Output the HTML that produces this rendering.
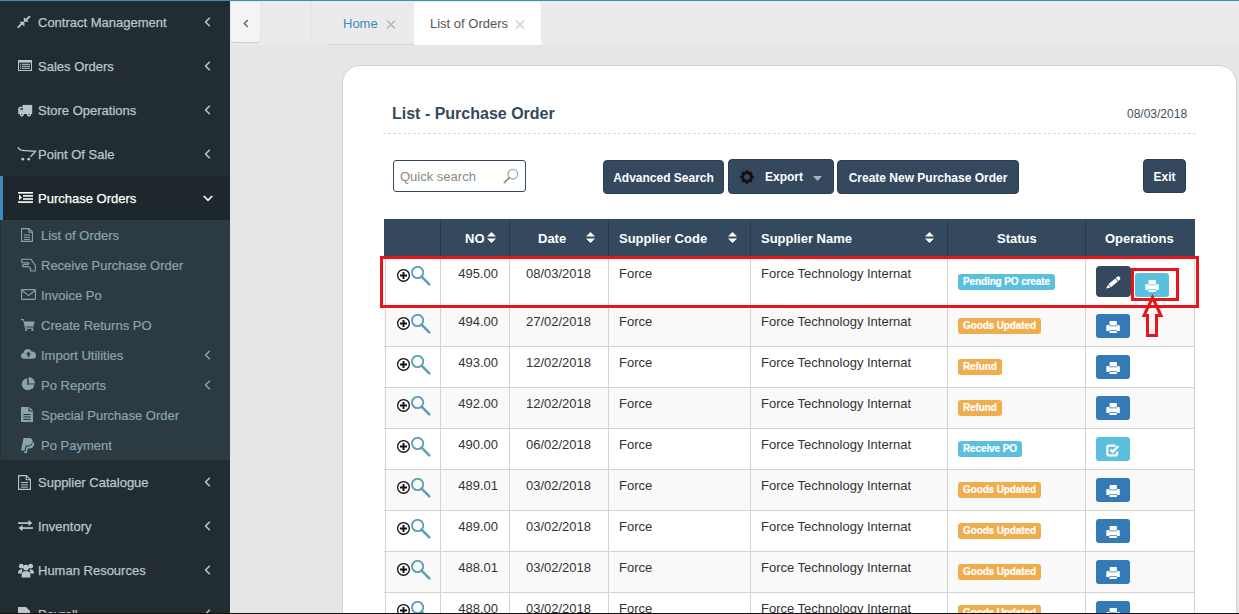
<!DOCTYPE html>
<html><head><meta charset="utf-8">
<style>
*{box-sizing:border-box;margin:0;padding:0}
html,body{width:1239px;height:614px;overflow:hidden;background:#e6e6e6;font-family:"Liberation Sans",sans-serif}
.abs{position:absolute}
#topline{left:0;top:0;width:1239px;height:1px;background:#3c8dbc;z-index:5}
#sidebar{left:0;top:0;width:230px;height:614px;background:#222d32}
.mi{position:absolute;left:0;width:230px;height:44px;color:#b8c7ce;font-size:13px}
.mi .t{position:absolute;left:38px;top:15px;white-space:nowrap;-webkit-text-stroke:0.25px currentColor}
.mi svg.ic{position:absolute}
.mi .chev{position:absolute;left:204px;top:17px}
.active{background:#1e282c;color:#fff}
#sub{left:0;top:220px;width:230px;box-shadow:inset 1px 0 0 #263237;height:240px;background:#2c3b41}
.si{position:absolute;left:0;width:230px;height:30px;color:#8aa4af;font-size:13px}
.si .t{position:absolute;left:41px;top:8px;white-space:nowrap;-webkit-text-stroke:0.2px currentColor}
.si svg.ic{position:absolute}
.si .chev{position:absolute;left:204px;top:10px}
#tabbar{left:230px;top:1px;width:1009px;height:44px;background:#ebebeb}
#collapse{left:231px;top:2px;width:29px;height:40px;background:#f4f4f4;border-radius:0 0 4px 4px;box-shadow:0 1px 1px rgba(0,0,0,.12)}
#card{left:342px;top:65px;width:895px;height:600px;background:#fff;border:1px solid #d2d2d2;border-radius:18px}
.btnp{position:absolute;background:#34495e;border:1px solid #2c3e50;border-radius:4px;color:#fff;font-size:12px;font-weight:bold;text-align:center;line-height:32px;padding-top:1px;white-space:nowrap}
.hd{position:absolute;top:231px;color:#fff;font-size:13px;font-weight:bold;white-space:nowrap}
.row{position:absolute;left:0;width:811px}
.row .c1{position:absolute;left:13px}
.row .c1 svg{display:block}
.tx{position:absolute;font-size:13px;color:#333;line-height:16px;white-space:nowrap}
.no{right:697px}
.dt{left:125px;width:99px;text-align:center}
.sc{left:235px}
.sn{left:377px}
.lbl{position:absolute;left:574px;height:16px;line-height:16px;padding:0 5px;border-radius:3px;color:#fff;font-size:10px;font-weight:bold;white-space:nowrap;letter-spacing:-0.12px;-webkit-text-stroke:0.2px #fff}
.lbl.info{background:#5bc0de}
.lbl.warn{background:#f0ad4e}
.btn{position:absolute;border-radius:3px}
.btn .ico{position:absolute;left:0;top:0}
.bdark{background:#34495e;border-radius:4px}
.bprim{background:#337ab7}
.binfo{background:#5bc0de}
</style></head><body>
<div id="topline" class="abs"></div>
<div id="sidebar" class="abs">
<div class="mi " style="top:0px"><svg class="ic" style="left:17px;top:16px" width="14" height="12" viewBox="0 0 14 12"><g stroke="#b8c7ce" stroke-width="1.9" fill="none" stroke-linecap="round"><path d="M12.5 0.6L9 4.1"/><path d="M1.3 11.2L4.8 7.7"/></g><g fill="#b8c7ce"><path d="M6.8 1.1V5.8H11.7Z"/><path d="M7.4 5.8V10.6L2.2 5.8Z"/></g></svg><span class="t" style="left:38px">Contract Management</span><svg class="chev" width="7" height="10" viewBox="0 0 7 10"><path d="M5.8 0.8L1.6 5L5.8 9.2" stroke="#b8c7ce" stroke-width="1.5" fill="none"/></svg></div>
<div class="mi " style="top:44px"><svg class="ic" style="left:18px;top:16px" width="14" height="11" viewBox="0 0 14 11"><g fill="#b8c7ce"><rect x="0" y="0" width="14" height="2.6"/><rect x="0" y="0" width="1" height="11"/><rect x="13" y="0" width="1" height="11"/><rect x="0" y="10" width="14" height="1"/><rect x="2" y="3.8" width="1.2" height="1"/><rect x="4" y="3.8" width="8" height="1"/><rect x="2" y="5.8" width="1.2" height="1"/><rect x="4" y="5.8" width="8" height="1"/><rect x="2" y="7.8" width="1.2" height="1"/><rect x="4" y="7.8" width="8" height="1"/></g></svg><span class="t" style="left:38px">Sales Orders</span><svg class="chev" width="7" height="10" viewBox="0 0 7 10"><path d="M5.8 0.8L1.6 5L5.8 9.2" stroke="#b8c7ce" stroke-width="1.5" fill="none"/></svg></div>
<div class="mi " style="top:88px"><svg class="ic" style="left:18px;top:16px" width="15" height="13" viewBox="0 0 15 13"><g fill="#b8c7ce"><path d="M4.6 0.9H14.2V10H4.6Z"/><path d="M0.2 10V5.2Q0.2 2.8 2.6 2.8H4.8V10Z"/><circle cx="3.8" cy="10.6" r="2.1"/><circle cx="11" cy="10.6" r="2.1"/></g><g fill="#222d32"><path d="M2 5.8Q2 3.9 3.6 3.9H4.8V5.8Z"/><circle cx="3.8" cy="10.6" r="0.7"/><circle cx="11" cy="10.6" r="0.7"/></g></svg><span class="t" style="left:38px">Store Operations</span><svg class="chev" width="7" height="10" viewBox="0 0 7 10"><path d="M5.8 0.8L1.6 5L5.8 9.2" stroke="#b8c7ce" stroke-width="1.5" fill="none"/></svg></div>
<div class="mi " style="top:132px"><svg class="ic" style="left:17px;top:14px" width="20" height="15" viewBox="0 0 20 15"><path d="M0.9 1.4Q2.4 4.2 5.2 4.4L18.6 5.3L13.5 10.7" stroke="#b8c7ce" stroke-width="1.3" fill="none"/><circle cx="5.8" cy="13.2" r="1.4" fill="#b8c7ce"/><circle cx="11.7" cy="13.2" r="1.4" fill="#b8c7ce"/></svg><span class="t" style="left:38px">Point Of Sale</span><svg class="chev" width="7" height="10" viewBox="0 0 7 10"><path d="M5.8 0.8L1.6 5L5.8 9.2" stroke="#b8c7ce" stroke-width="1.5" fill="none"/></svg></div>
<div class="abs" style="left:0;top:176px;width:230px;height:44px;background:#1e282c"></div><div class="abs" style="left:0;top:176px;width:3px;height:44px;background:#3c8dbc"></div>
<div class="mi" style="top:176px;color:#fff"><svg class="ic" style="left:18px;top:16px" width="15" height="11" viewBox="0 0 15 11"><g fill="#fff"><rect x="0" y="0" width="15" height="1.6"/><rect x="5" y="3.1" width="10" height="1.6"/><rect x="5" y="6.2" width="10" height="1.6"/><rect x="0" y="9.3" width="15" height="1.6"/><path d="M1 2.6L4 5.4L1 8.2Z"/></g></svg><span class="t">Purchase Orders</span><svg class="chev" style="left:203px;top:19px" width="10" height="7" viewBox="0 0 10 7"><path d="M0.8 1L5 5.3L9.2 1" stroke="#fff" stroke-width="1.6" fill="none"/></svg></div>
</div>
<div id="sub" class="abs">
<div class="si" style="top:0px"><svg class="ic" style="left:21px;top:8px" width="12" height="14" viewBox="0 0 12 14"><g fill="none" stroke="#8aa4af" stroke-width="1.1"><path d="M0.6 0.6H8L11.4 4V13.4H0.6Z"/><path d="M7.8 0.6V4.2H11.4"/></g><g fill="#8aa4af"><rect x="3" y="6.5" width="6" height="1"/><rect x="3" y="8.8" width="6" height="1"/><rect x="3" y="11" width="6" height="1"/></g></svg><span class="t">List of Orders</span></div>
<div class="si" style="top:30px"><svg class="ic" style="left:21px;top:8px" width="15" height="14" viewBox="0 0 15 14"><path d="M0.8 1.2H10L14.3 7.5V13H9.6V10.8L7.5 8.6H2.2Q1.4 8.6 1.6 7.6Q1.8 6.4 3 6.4H7.2L7.6 4.8H1.8Q0.6 4.8 0.8 3.4Z" fill="none" stroke="#8aa4af" stroke-width="1.1"/></svg><span class="t">Receive Purchase Order</span></div>
<div class="si" style="top:60px"><svg class="ic" style="left:21px;top:9px" width="15" height="11" viewBox="0 0 15 11"><g fill="none" stroke="#8aa4af" stroke-width="1.1"><rect x="0.6" y="0.6" width="13.8" height="9.8" rx="0.8"/><path d="M0.8 1.2L7.5 6.6L14.2 1.2"/></g></svg><span class="t">Invoice Po</span></div>
<div class="si" style="top:90px"><svg class="ic" style="left:21px;top:9px" width="14" height="12" viewBox="0 0 14 12"><g fill="#8aa4af"><path d="M0 0H2.6L3.4 2.4H13.6L12.4 7.6H4.6L5 8.6H12.4V9.8H4.1L2.2 1.3H0Z"/><circle cx="5.2" cy="10.9" r="1.1"/><circle cx="11.4" cy="10.9" r="1.1"/></g></svg><span class="t">Create Returns PO</span></div>
<div class="si" style="top:120px"><svg class="ic" style="left:21px;top:8px" width="15" height="11" viewBox="0 0 15 11"><path d="M3.2 10.8Q0 10.8 0 7.8Q0 5.2 2.6 5Q2.8 1.4 6.6 1Q9.4 0.9 10.6 3.4Q15 3.4 15 7.2Q15 10.8 11.6 10.8Z" fill="#8aa4af"/><path d="M7.5 3.6L10.2 6.6H8.4V9H6.6V6.6H4.8Z" fill="#2c3b41"/></svg><span class="t">Import Utilities</span><svg class="chev" width="7" height="10" viewBox="0 0 7 10"><path d="M5.8 0.8L1.6 5L5.8 9.2" stroke="#8aa4af" stroke-width="1.5" fill="none"/></svg></div>
<div class="si" style="top:150px"><svg class="ic" style="left:21px;top:7px" width="14" height="14" viewBox="0 0 14 14"><path d="M6.2 1.2A6 6 0 1 0 12.8 7.8H6.2Z" fill="#8aa4af"/><path d="M7.6 0V6.4H14A6.6 6.6 0 0 0 7.6 0Z" fill="#8aa4af"/><path d="M8 7.6H13.6L11.6 12Z" fill="#8aa4af"/></svg><span class="t">Po Reports</span><svg class="chev" width="7" height="10" viewBox="0 0 7 10"><path d="M5.8 0.8L1.6 5L5.8 9.2" stroke="#8aa4af" stroke-width="1.5" fill="none"/></svg></div>
<div class="si" style="top:180px"><svg class="ic" style="left:21px;top:7px" width="12" height="15" viewBox="0 0 12 15"><path d="M0 0H7.6V4.6H12V15H0Z" fill="#8aa4af"/><path d="M8.6 0L12 3.5H8.6Z" fill="#8aa4af"/><g fill="#2c3b41"><rect x="2.4" y="7" width="7.2" height="1.1"/><rect x="2.4" y="9.4" width="7.2" height="1.1"/><rect x="2.4" y="11.8" width="7.2" height="1.1"/></g></svg><span class="t">Special Purchase Order</span></div>
<div class="si" style="top:210px"><svg class="ic" style="left:21px;top:8px" width="13" height="15" viewBox="0 0 13 15"><path d="M2.6 0H8Q12.2 0 11.4 3.8Q10.6 7.4 6.6 7.4H4.6L3.6 12.6H0Z" fill="#8aa4af"/><path d="M11.8 3.2Q13.6 4.6 12.8 7.4Q12 10.4 8.2 10.4H6.8L5.9 15H2.8L3.2 13.4H4.6L5.5 8.6H7.2Q11.2 8.6 11.8 3.2Z" fill="#8aa4af"/></svg><span class="t">Po Payment</span></div>
</div>
<div class="abs" style="left:0;top:460px;width:230px;height:154px">
<div class="mi " style="top:0px"><svg class="ic" style="left:18px;top:15px" width="13" height="15" viewBox="0 0 13 15"><g fill="none" stroke="#b8c7ce" stroke-width="1.1"><path d="M0.6 0.6H8.4L12.4 4.6V14.4H0.6Z"/><path d="M8.2 0.6V4.8H12.4"/></g><g fill="#b8c7ce"><rect x="3" y="7" width="7" height="1"/><rect x="3" y="9.3" width="7" height="1"/><rect x="3" y="11.6" width="7" height="1"/></g></svg><span class="t" style="left:38px">Supplier Catalogue</span><svg class="chev" width="7" height="10" viewBox="0 0 7 10"><path d="M5.8 0.8L1.6 5L5.8 9.2" stroke="#b8c7ce" stroke-width="1.5" fill="none"/></svg></div>
<div class="mi " style="top:44px"><svg class="ic" style="left:18px;top:16px" width="15" height="11" viewBox="0 0 15 11"><g fill="#b8c7ce"><rect x="0" y="2.2" width="11" height="1.7"/><path d="M10.5 0L14.4 3.05L10.5 6.1Z"/><rect x="4" y="7.2" width="11" height="1.7"/><path d="M4.5 4.9L0.6 8.05L4.5 11.2Z"/></g></svg><span class="t" style="left:38px">Inventory</span><svg class="chev" width="7" height="10" viewBox="0 0 7 10"><path d="M5.8 0.8L1.6 5L5.8 9.2" stroke="#b8c7ce" stroke-width="1.5" fill="none"/></svg></div>
<div class="mi " style="top:88px"><svg class="ic" style="left:18px;top:15px" width="16" height="15" viewBox="0 0 16 15"><g fill="#b8c7ce"><circle cx="3.3" cy="3.2" r="2.4"/><circle cx="12.7" cy="3.2" r="2.4"/><circle cx="8" cy="4.6" r="2.9"/><path d="M0 10.6Q0 6.6 3 6.6H4.6Q3.6 8.6 4 10.6Z"/><path d="M16 10.6Q16 6.6 13 6.6H11.4Q12.4 8.6 12 10.6Z"/><path d="M3.6 14.4Q3.4 8.2 6.2 8.2H9.8Q12.6 8.2 12.4 14.4Z"/></g></svg><span class="t" style="left:38px">Human Resources</span><svg class="chev" width="7" height="10" viewBox="0 0 7 10"><path d="M5.8 0.8L1.6 5L5.8 9.2" stroke="#b8c7ce" stroke-width="1.5" fill="none"/></svg></div>
<div class="mi " style="top:132px"><svg class="ic" style="left:18px;top:15px" width="13" height="15" viewBox="0 0 13 15"><path d="M0 0H8L12 4V15H0Z" fill="#b8c7ce"/></svg><span class="t" style="left:38px">Payroll</span><svg class="chev" width="7" height="10" viewBox="0 0 7 10"><path d="M5.8 0.8L1.6 5L5.8 9.2" stroke="#b8c7ce" stroke-width="1.5" fill="none"/></svg></div>
</div>
<div id="tabbar" class="abs"></div>
<div class="abs" style="left:311px;top:1px;width:1px;height:44px;background:#e5e5e5"></div>
<div id="collapse" class="abs"><svg class="abs" style="left:11px;top:16.5px" width="8" height="9" viewBox="0 0 8 9"><path d="M5.8 1L2.3 4.5L5.8 8" stroke="#666" stroke-width="1.4" fill="none"/></svg></div>
<div class="abs" style="left:327px;top:44px;width:87px;height:1px;background:#d6d6d6"></div>
<div class="abs" style="left:343px;top:16px;font-size:13px;color:#3c8dbc">Home</div>
<svg class="abs" style="left:386px;top:20px" width="10" height="9" viewBox="0 0 10 9"><path d="M1 0.5L9 8.5M9 0.5L1 8.5" stroke="#b3b3b3" stroke-width="1.4"/></svg>
<div class="abs" style="left:414px;top:2px;width:127px;height:43px;background:#fff;border-radius:3px 3px 0 0"></div>
<div class="abs" style="left:430px;top:16px;font-size:13px;color:#555">List of Orders</div>
<svg class="abs" style="left:515px;top:20px" width="10" height="9" viewBox="0 0 10 9"><path d="M1 0.5L9 8.5M9 0.5L1 8.5" stroke="#cccccc" stroke-width="1.4"/></svg>
<div id="card" class="abs"></div>
<div class="abs" style="left:392px;top:105px;font-size:16px;font-weight:bold;color:#34495e">List - Purchase Order</div>
<div class="abs" style="left:1127px;top:107px;font-size:12px;color:#3f5165">08/03/2018</div>
<div class="abs" style="left:383px;top:133px;width:813px;height:0;border-top:1px dashed #dcdcdc"></div>
<div class="abs" style="left:393px;top:160px;width:133px;height:32px;border:1px solid #34495e;border-radius:3px"></div>
<div class="abs" style="left:400px;top:169px;font-size:13px;color:#888">Quick search</div>
<svg class="abs" style="left:503px;top:168px" width="16" height="16" viewBox="0 0 16 16"><circle cx="9.8" cy="6.2" r="4.8" fill="none" stroke="#aaa" stroke-width="1.4"/><path d="M6.3 9.7L1.5 14.5" stroke="#999" stroke-width="2" stroke-linecap="round"/></svg>
<div class="btnp" style="left:603px;top:160px;width:121px;height:34px;">Advanced Search</div>
<div class="btnp" style="left:728px;top:159px;width:106px;height:35px;"><svg class="abs" style="left:9.5px;top:9.2px" width="16" height="16" viewBox="-8 -8 16 16"><path d="M0.00 -7.30L2.14 -5.17L5.16 -5.16L5.17 -2.14L7.30 0.00L5.17 2.14L5.16 5.16L2.14 5.17L0.00 7.30L-2.14 5.17L-5.16 5.16L-5.17 2.14L-7.30 0.00L-5.17 -2.14L-5.16 -5.16L-2.14 -5.17Z" fill="#111"/><circle r="2.5" fill="#34495e" stroke="#44556a" stroke-width="0.6"/></svg><span class="abs" style="left:36px;top:10px;line-height:normal">Export</span><svg class="abs" style="left:84px;top:16px" width="9" height="5" viewBox="0 0 9 5"><path d="M0 0H9L4.5 5Z" fill="#aab4bf"/></svg></div>
<div class="btnp" style="left:837px;top:160px;width:182px;height:34px;">Create New Purchase Order</div>
<div class="btnp" style="left:1143px;top:159px;width:43px;height:34px;">Exit</div>
<div id="tbl" class="abs" style="left:384px;top:0;width:811px;height:614px">
<div class="abs" style="left:0;top:219px;width:811px;height:37px;background:#34495e"></div>
<div class="abs" style="left:56px;top:219px;width:1px;height:37px;background:#2a3b4c"></div>
<div class="abs" style="left:125px;top:219px;width:1px;height:37px;background:#2a3b4c"></div>
<div class="abs" style="left:224px;top:219px;width:1px;height:37px;background:#2a3b4c"></div>
<div class="abs" style="left:366px;top:219px;width:1px;height:37px;background:#2a3b4c"></div>
<div class="abs" style="left:563px;top:219px;width:1px;height:37px;background:#2a3b4c"></div>
<div class="abs" style="left:701px;top:219px;width:1px;height:37px;background:#2a3b4c"></div>
<svg class="abs" style="left:103px;top:232px" width="9" height="11" viewBox="0 0 9 11"><path d="M4.5 0L9 4.6H0Z M4.5 11L9 6.4H0Z" fill="#fff"/></svg>
<svg class="abs" style="left:202px;top:232px" width="9" height="11" viewBox="0 0 9 11"><path d="M4.5 0L9 4.6H0Z M4.5 11L9 6.4H0Z" fill="#fff"/></svg>
<svg class="abs" style="left:344px;top:232px" width="9" height="11" viewBox="0 0 9 11"><path d="M4.5 0L9 4.6H0Z M4.5 11L9 6.4H0Z" fill="#fff"/></svg>
<svg class="abs" style="left:541px;top:232px" width="9" height="11" viewBox="0 0 9 11"><path d="M4.5 0L9 4.6H0Z M4.5 11L9 6.4H0Z" fill="#fff"/></svg>
<div class="hd" style="left:81px">NO</div><div class="hd" style="left:154px">Date</div><div class="hd" style="left:235px">Supplier Code</div><div class="hd" style="left:377px">Supplier Name</div><div class="hd" style="left:613px">Status</div><div class="hd" style="left:721px">Operations</div>
<div class="row" style="top:256px;height:50px;background:#fff">
<div class="c1" style="top:10px"><svg width="36" height="22" viewBox="0 0 36 22"><circle cx="6.5" cy="9.4" r="5.85" fill="none" stroke="#111" stroke-width="1.3"/><path d="M3 9.5h7M6.5 6v7" stroke="#111" stroke-width="1.9"/><circle cx="20.6" cy="6.5" r="5.65" fill="none" stroke="#5c9fb6" stroke-width="1.8"/><path d="M24.6 10.6L32.3 18.3" stroke="#5c9fb6" stroke-width="2.6" stroke-linecap="round"/></svg></div>
<div class="tx no" style="top:10px">495.00</div>
<div class="tx dt" style="top:10px">08/03/2018</div>
<div class="tx sc" style="top:10px">Force</div>
<div class="tx sn" style="top:10px">Force Technology Internat</div>
<div class="lbl info" style="top:18px">Pending PO create</div>
<div class="btn bdark" style="top:10px;left:712px;width:35px;height:31px"><svg class="ico" width="35" height="31" viewBox="0 0 35 31"><g transform="translate(10.2,22.6) rotate(-40)"><path d="M0 0L3.8 -2V2Z" fill="#fff"/><rect x="4.5" y="-2" width="9" height="4" fill="#fff"/><path d="M14.2 -2H16Q17.8 -2 17.8 0Q17.8 2 16 2H14.2Z" fill="#fff"/></g></svg></div>
<div class="btn binfo" style="top:17px;left:751px;width:34px;height:24px"><svg class="ico" width="34" height="24" viewBox="0 0 34 24"><g transform="translate(10,7)"><path d="M4.2 0H10.2Q10.9 0 10.9 0.8V4.4H3.6V0.8Q3.6 0 4.2 0Z" fill="#fff"/><path d="M0.3 5Q0.3 4.1 1.2 4.1H3.2V5.3H11.2V4.1H12.9Q13.8 4.1 13.8 5V9.9H10.9V9.2H3.2V9.9H0.3Z" fill="#fff"/><rect x="3.4" y="9.9" width="7.5" height="2.1" rx="0.4" fill="#fff"/></g></svg></div>
</div>
<div class="row" style="top:306px;height:41px;background:#f9f9f9">
<div class="c1" style="top:8px"><svg width="36" height="22" viewBox="0 0 36 22"><circle cx="6.5" cy="9.4" r="5.85" fill="none" stroke="#111" stroke-width="1.3"/><path d="M3 9.5h7M6.5 6v7" stroke="#111" stroke-width="1.9"/><circle cx="20.6" cy="6.5" r="5.65" fill="none" stroke="#5c9fb6" stroke-width="1.8"/><path d="M24.6 10.6L32.3 18.3" stroke="#5c9fb6" stroke-width="2.6" stroke-linecap="round"/></svg></div>
<div class="tx no" style="top:8px">494.00</div>
<div class="tx dt" style="top:8px">27/02/2018</div>
<div class="tx sc" style="top:8px">Force</div>
<div class="tx sn" style="top:8px">Force Technology Internat</div>
<div class="lbl warn" style="top:12px">Goods Updated</div>
<div class="btn bprim" style="top:8px;left:712px;width:34px;height:24px"><svg class="ico" width="34" height="24" viewBox="0 0 34 24"><g transform="translate(10,7)"><path d="M4.2 0H10.2Q10.9 0 10.9 0.8V4.4H3.6V0.8Q3.6 0 4.2 0Z" fill="#fff"/><path d="M0.3 5Q0.3 4.1 1.2 4.1H3.2V5.3H11.2V4.1H12.9Q13.8 4.1 13.8 5V9.9H10.9V9.2H3.2V9.9H0.3Z" fill="#fff"/><rect x="3.4" y="9.9" width="7.5" height="2.1" rx="0.4" fill="#fff"/></g></svg></div>
</div>
<div class="row" style="top:347px;height:41px;background:#fff">
<div class="c1" style="top:8px"><svg width="36" height="22" viewBox="0 0 36 22"><circle cx="6.5" cy="9.4" r="5.85" fill="none" stroke="#111" stroke-width="1.3"/><path d="M3 9.5h7M6.5 6v7" stroke="#111" stroke-width="1.9"/><circle cx="20.6" cy="6.5" r="5.65" fill="none" stroke="#5c9fb6" stroke-width="1.8"/><path d="M24.6 10.6L32.3 18.3" stroke="#5c9fb6" stroke-width="2.6" stroke-linecap="round"/></svg></div>
<div class="tx no" style="top:8px">493.00</div>
<div class="tx dt" style="top:8px">12/02/2018</div>
<div class="tx sc" style="top:8px">Force</div>
<div class="tx sn" style="top:8px">Force Technology Internat</div>
<div class="lbl warn" style="top:12px">Refund</div>
<div class="btn bprim" style="top:8px;left:712px;width:34px;height:24px"><svg class="ico" width="34" height="24" viewBox="0 0 34 24"><g transform="translate(10,7)"><path d="M4.2 0H10.2Q10.9 0 10.9 0.8V4.4H3.6V0.8Q3.6 0 4.2 0Z" fill="#fff"/><path d="M0.3 5Q0.3 4.1 1.2 4.1H3.2V5.3H11.2V4.1H12.9Q13.8 4.1 13.8 5V9.9H10.9V9.2H3.2V9.9H0.3Z" fill="#fff"/><rect x="3.4" y="9.9" width="7.5" height="2.1" rx="0.4" fill="#fff"/></g></svg></div>
</div>
<div class="row" style="top:388px;height:41px;background:#f9f9f9">
<div class="c1" style="top:8px"><svg width="36" height="22" viewBox="0 0 36 22"><circle cx="6.5" cy="9.4" r="5.85" fill="none" stroke="#111" stroke-width="1.3"/><path d="M3 9.5h7M6.5 6v7" stroke="#111" stroke-width="1.9"/><circle cx="20.6" cy="6.5" r="5.65" fill="none" stroke="#5c9fb6" stroke-width="1.8"/><path d="M24.6 10.6L32.3 18.3" stroke="#5c9fb6" stroke-width="2.6" stroke-linecap="round"/></svg></div>
<div class="tx no" style="top:8px">492.00</div>
<div class="tx dt" style="top:8px">12/02/2018</div>
<div class="tx sc" style="top:8px">Force</div>
<div class="tx sn" style="top:8px">Force Technology Internat</div>
<div class="lbl warn" style="top:12px">Refund</div>
<div class="btn bprim" style="top:8px;left:712px;width:34px;height:24px"><svg class="ico" width="34" height="24" viewBox="0 0 34 24"><g transform="translate(10,7)"><path d="M4.2 0H10.2Q10.9 0 10.9 0.8V4.4H3.6V0.8Q3.6 0 4.2 0Z" fill="#fff"/><path d="M0.3 5Q0.3 4.1 1.2 4.1H3.2V5.3H11.2V4.1H12.9Q13.8 4.1 13.8 5V9.9H10.9V9.2H3.2V9.9H0.3Z" fill="#fff"/><rect x="3.4" y="9.9" width="7.5" height="2.1" rx="0.4" fill="#fff"/></g></svg></div>
</div>
<div class="row" style="top:429px;height:41px;background:#fff">
<div class="c1" style="top:8px"><svg width="36" height="22" viewBox="0 0 36 22"><circle cx="6.5" cy="9.4" r="5.85" fill="none" stroke="#111" stroke-width="1.3"/><path d="M3 9.5h7M6.5 6v7" stroke="#111" stroke-width="1.9"/><circle cx="20.6" cy="6.5" r="5.65" fill="none" stroke="#5c9fb6" stroke-width="1.8"/><path d="M24.6 10.6L32.3 18.3" stroke="#5c9fb6" stroke-width="2.6" stroke-linecap="round"/></svg></div>
<div class="tx no" style="top:8px">490.00</div>
<div class="tx dt" style="top:8px">06/02/2018</div>
<div class="tx sc" style="top:8px">Force</div>
<div class="tx sn" style="top:8px">Force Technology Internat</div>
<div class="lbl info" style="top:12px">Receive PO</div>
<div class="btn binfo" style="top:8px;left:712px;width:34px;height:24px"><svg class="ico" width="34" height="24" viewBox="0 0 34 24"><path d="M19.5 8.6H13Q11.3 8.6 11.3 10.3V16.7Q11.3 18.4 13 18.4H19.4Q21.1 18.4 21.1 16.7V14.8" fill="none" stroke="#fff" stroke-width="2.2"/><path d="M14.4 12.6L16.6 14.8L22.4 9.2" fill="none" stroke="#fff" stroke-width="2.4"/></svg></div>
</div>
<div class="row" style="top:470px;height:41px;background:#f9f9f9">
<div class="c1" style="top:8px"><svg width="36" height="22" viewBox="0 0 36 22"><circle cx="6.5" cy="9.4" r="5.85" fill="none" stroke="#111" stroke-width="1.3"/><path d="M3 9.5h7M6.5 6v7" stroke="#111" stroke-width="1.9"/><circle cx="20.6" cy="6.5" r="5.65" fill="none" stroke="#5c9fb6" stroke-width="1.8"/><path d="M24.6 10.6L32.3 18.3" stroke="#5c9fb6" stroke-width="2.6" stroke-linecap="round"/></svg></div>
<div class="tx no" style="top:8px">489.01</div>
<div class="tx dt" style="top:8px">03/02/2018</div>
<div class="tx sc" style="top:8px">Force</div>
<div class="tx sn" style="top:8px">Force Technology Internat</div>
<div class="lbl warn" style="top:12px">Goods Updated</div>
<div class="btn bprim" style="top:8px;left:712px;width:34px;height:24px"><svg class="ico" width="34" height="24" viewBox="0 0 34 24"><g transform="translate(10,7)"><path d="M4.2 0H10.2Q10.9 0 10.9 0.8V4.4H3.6V0.8Q3.6 0 4.2 0Z" fill="#fff"/><path d="M0.3 5Q0.3 4.1 1.2 4.1H3.2V5.3H11.2V4.1H12.9Q13.8 4.1 13.8 5V9.9H10.9V9.2H3.2V9.9H0.3Z" fill="#fff"/><rect x="3.4" y="9.9" width="7.5" height="2.1" rx="0.4" fill="#fff"/></g></svg></div>
</div>
<div class="row" style="top:511px;height:41px;background:#fff">
<div class="c1" style="top:8px"><svg width="36" height="22" viewBox="0 0 36 22"><circle cx="6.5" cy="9.4" r="5.85" fill="none" stroke="#111" stroke-width="1.3"/><path d="M3 9.5h7M6.5 6v7" stroke="#111" stroke-width="1.9"/><circle cx="20.6" cy="6.5" r="5.65" fill="none" stroke="#5c9fb6" stroke-width="1.8"/><path d="M24.6 10.6L32.3 18.3" stroke="#5c9fb6" stroke-width="2.6" stroke-linecap="round"/></svg></div>
<div class="tx no" style="top:8px">489.00</div>
<div class="tx dt" style="top:8px">03/02/2018</div>
<div class="tx sc" style="top:8px">Force</div>
<div class="tx sn" style="top:8px">Force Technology Internat</div>
<div class="lbl warn" style="top:12px">Goods Updated</div>
<div class="btn bprim" style="top:8px;left:712px;width:34px;height:24px"><svg class="ico" width="34" height="24" viewBox="0 0 34 24"><g transform="translate(10,7)"><path d="M4.2 0H10.2Q10.9 0 10.9 0.8V4.4H3.6V0.8Q3.6 0 4.2 0Z" fill="#fff"/><path d="M0.3 5Q0.3 4.1 1.2 4.1H3.2V5.3H11.2V4.1H12.9Q13.8 4.1 13.8 5V9.9H10.9V9.2H3.2V9.9H0.3Z" fill="#fff"/><rect x="3.4" y="9.9" width="7.5" height="2.1" rx="0.4" fill="#fff"/></g></svg></div>
</div>
<div class="row" style="top:552px;height:41px;background:#f9f9f9">
<div class="c1" style="top:8px"><svg width="36" height="22" viewBox="0 0 36 22"><circle cx="6.5" cy="9.4" r="5.85" fill="none" stroke="#111" stroke-width="1.3"/><path d="M3 9.5h7M6.5 6v7" stroke="#111" stroke-width="1.9"/><circle cx="20.6" cy="6.5" r="5.65" fill="none" stroke="#5c9fb6" stroke-width="1.8"/><path d="M24.6 10.6L32.3 18.3" stroke="#5c9fb6" stroke-width="2.6" stroke-linecap="round"/></svg></div>
<div class="tx no" style="top:8px">488.01</div>
<div class="tx dt" style="top:8px">03/02/2018</div>
<div class="tx sc" style="top:8px">Force</div>
<div class="tx sn" style="top:8px">Force Technology Internat</div>
<div class="lbl warn" style="top:12px">Goods Updated</div>
<div class="btn bprim" style="top:8px;left:712px;width:34px;height:24px"><svg class="ico" width="34" height="24" viewBox="0 0 34 24"><g transform="translate(10,7)"><path d="M4.2 0H10.2Q10.9 0 10.9 0.8V4.4H3.6V0.8Q3.6 0 4.2 0Z" fill="#fff"/><path d="M0.3 5Q0.3 4.1 1.2 4.1H3.2V5.3H11.2V4.1H12.9Q13.8 4.1 13.8 5V9.9H10.9V9.2H3.2V9.9H0.3Z" fill="#fff"/><rect x="3.4" y="9.9" width="7.5" height="2.1" rx="0.4" fill="#fff"/></g></svg></div>
</div>
<div class="row" style="top:593px;height:41px;background:#fff">
<div class="c1" style="top:8px"><svg width="36" height="22" viewBox="0 0 36 22"><circle cx="6.5" cy="9.4" r="5.85" fill="none" stroke="#111" stroke-width="1.3"/><path d="M3 9.5h7M6.5 6v7" stroke="#111" stroke-width="1.9"/><circle cx="20.6" cy="6.5" r="5.65" fill="none" stroke="#5c9fb6" stroke-width="1.8"/><path d="M24.6 10.6L32.3 18.3" stroke="#5c9fb6" stroke-width="2.6" stroke-linecap="round"/></svg></div>
<div class="tx no" style="top:8px">488.00</div>
<div class="tx dt" style="top:8px">03/02/2018</div>
<div class="tx sc" style="top:8px">Force</div>
<div class="tx sn" style="top:8px">Force Technology Internat</div>
<div class="lbl warn" style="top:12px">Goods Updated</div>
<div class="btn bprim" style="top:8px;left:712px;width:34px;height:24px"><svg class="ico" width="34" height="24" viewBox="0 0 34 24"><g transform="translate(10,7)"><path d="M4.2 0H10.2Q10.9 0 10.9 0.8V4.4H3.6V0.8Q3.6 0 4.2 0Z" fill="#fff"/><path d="M0.3 5Q0.3 4.1 1.2 4.1H3.2V5.3H11.2V4.1H12.9Q13.8 4.1 13.8 5V9.9H10.9V9.2H3.2V9.9H0.3Z" fill="#fff"/><rect x="3.4" y="9.9" width="7.5" height="2.1" rx="0.4" fill="#fff"/></g></svg></div>
</div>
<div class="abs" style="left:1px;top:256px;width:1px;height:358px;background:#d3d3d3"></div>
<div class="abs" style="left:56px;top:256px;width:1px;height:358px;background:#d3d3d3"></div>
<div class="abs" style="left:125px;top:256px;width:1px;height:358px;background:#d3d3d3"></div>
<div class="abs" style="left:224px;top:256px;width:1px;height:358px;background:#d3d3d3"></div>
<div class="abs" style="left:366px;top:256px;width:1px;height:358px;background:#d3d3d3"></div>
<div class="abs" style="left:563px;top:256px;width:1px;height:358px;background:#d3d3d3"></div>
<div class="abs" style="left:701px;top:256px;width:1px;height:358px;background:#d3d3d3"></div>
<div class="abs" style="left:810px;top:256px;width:1px;height:358px;background:#d3d3d3"></div>
<div class="abs" style="left:0;top:305px;width:811px;height:1px;background:#d3d3d3"></div>
<div class="abs" style="left:0;top:346px;width:811px;height:1px;background:#d3d3d3"></div>
<div class="abs" style="left:0;top:387px;width:811px;height:1px;background:#d3d3d3"></div>
<div class="abs" style="left:0;top:428px;width:811px;height:1px;background:#d3d3d3"></div>
<div class="abs" style="left:0;top:469px;width:811px;height:1px;background:#d3d3d3"></div>
<div class="abs" style="left:0;top:510px;width:811px;height:1px;background:#d3d3d3"></div>
<div class="abs" style="left:0;top:551px;width:811px;height:1px;background:#d3d3d3"></div>
<div class="abs" style="left:0;top:592px;width:811px;height:1px;background:#d3d3d3"></div>
</div>
<svg class="abs" style="left:0;top:0" width="1239" height="614" viewBox="0 0 1239 614"><g fill="none" stroke="#e8141b" stroke-width="3"><rect x="381.5" y="257.5" width="816" height="49"/><rect x="1132.5" y="269.5" width="45" height="30"/><path d="M1152.5 297.5L1161 315.5H1156.5V335.5H1147.5V315.5H1144Z"/></g></svg>
<div class="abs" style="left:0;top:613px;width:1239px;height:1px;background:#111"></div>
</body></html>
